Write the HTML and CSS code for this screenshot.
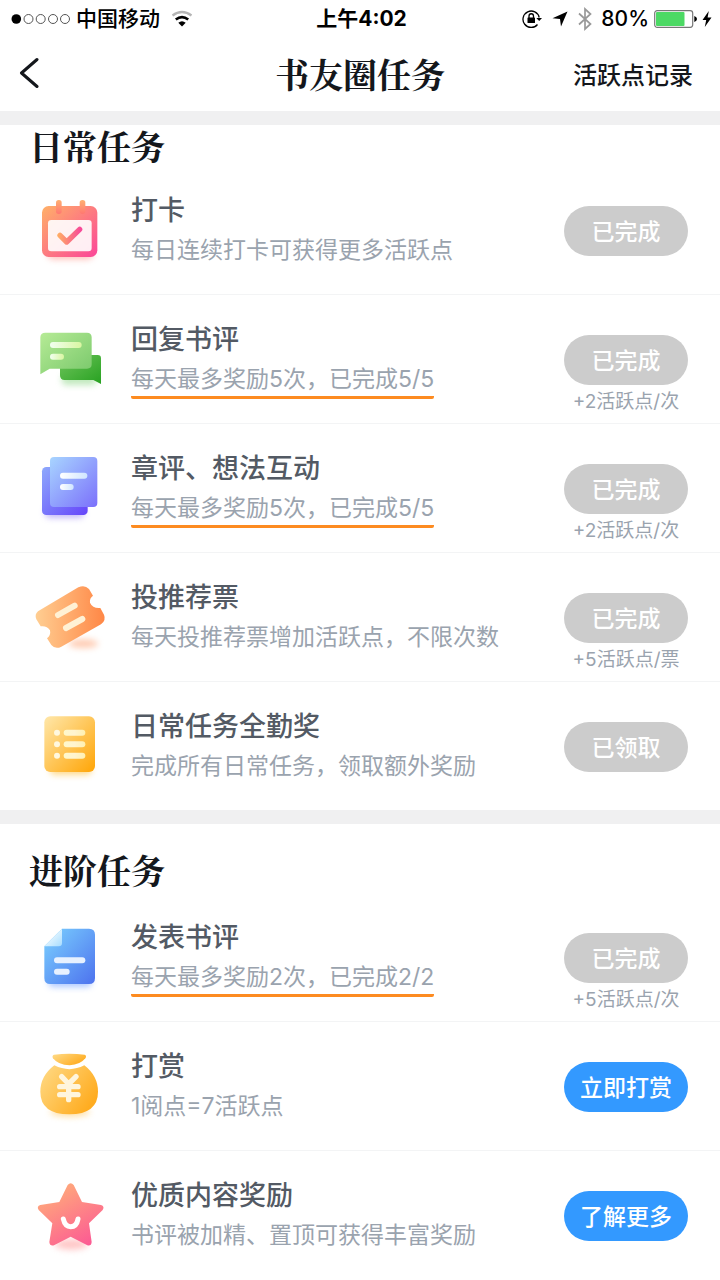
FILE: index.html
```html
<!DOCTYPE html>
<html lang="zh-CN">
<head>
  <meta charset="UTF-8">
  <meta name="viewport" content="width=device-width, initial-scale=1.0">
  <title>书友圈任务</title>
  <link rel="stylesheet" href="styles.css">
</head>
<body>
  <div class="status-bar">
    <div class="status-left">
      <svg class="signal" width="60" height="12" viewBox="0 0 60 12" aria-hidden="true">
        <circle cx="5.300" cy="6" r="4.800" fill="#000"/>
        <g fill="none" stroke="#555" stroke-width="1">
          <circle cx="17.500" cy="6" r="4.500"/>
          <circle cx="29.700" cy="6" r="4.500"/>
          <circle cx="42" cy="6" r="4.500"/>
          <circle cx="54" cy="6" r="4.500"/>
        </g>
      </svg>
      <span>中国移动</span>
      <svg class="wifi" width="22" height="18" viewBox="0 0 22 18" aria-hidden="true">
        <path d="M1.500 5.500 Q11 -1.500 20.500 5.500" fill="none" stroke="#b5b5b5" stroke-width="2.200"/>
        <path d="M4.800 9.600 Q11 4.600 17.200 9.600" fill="none" stroke="#000" stroke-width="2.600"/>
        <path d="M7.300 12.800 Q11 9.800 14.700 12.800 L11 16.500 Z" fill="#000"/>
      </svg>
    </div>
    <div class="status-time">上午4:02</div>
    <div class="status-right">
      <svg width="20" height="20" viewBox="0 0 20 20" aria-hidden="true">
        <path d="M15.500 15.500 A8.200 8.200 0 1 1 17.200 8.500" fill="none" stroke="#000" stroke-width="1.300"/>
        <path d="M14.300 9 H20 L17.200 12 Z" fill="#000"/>
        <rect x="5.500" y="8.500" width="7.500" height="5.500" rx="0.600" fill="#000"/>
        <path d="M7 9 V7 A2.200 2.200 0 0 1 11.500 7 V9" fill="none" stroke="#000" stroke-width="1.300"/>
      </svg>
      <svg class="arrow" width="16" height="16" viewBox="0 0 16 16" aria-hidden="true">
        <path d="M15.500 0.500 L9 15.500 L8 8 L0.500 7.200 Z" fill="#000"/>
      </svg>
      <svg class="bluetooth" width="14" height="24" viewBox="0 0 14 24" aria-hidden="true">
        <path d="M1 6.500 L12.500 17 L7 22 V2 L12.500 7 L1 17.500" fill="none" stroke="#999" stroke-width="1.700"/>
      </svg>
      <span class="percent">80%</span>
      <svg class="battery" width="43" height="18" viewBox="0 0 43 18" aria-hidden="true">
        <rect x="0.700" y="0.700" width="38" height="16.600" rx="2.500" fill="#fff" stroke="#777" stroke-width="1.200"/>
        <rect x="2" y="2" width="28.500" height="14" rx="1" fill="#4cd964"/>
        <path d="M40.300 6 Q43 7 43 9 Q43 11 40.300 12 Z" fill="#000"/>
      </svg>
      <svg class="bolt" width="10" height="18" viewBox="0 0 10 18" aria-hidden="true">
        <path d="M6.800 1 L0.500 10 H4.200 L2.800 17 L9.500 7.500 H5.600 Z" fill="#000"/>
      </svg>
    </div>
  </div>

  <header class="nav-bar">
    <button class="back" type="button" aria-label="返回">
      <svg width="20" height="32" viewBox="0 0 20 32" aria-hidden="true">
        <path d="M18 2.500 L2.500 16 L18 29.500" fill="none" stroke="#14171c" stroke-width="3" stroke-linecap="round" stroke-linejoin="round"/>
      </svg>
    </button>
    <h1>书友圈任务</h1>
    <a class="record-link" href="#">活跃点记录</a>
  </header>

  <main>
    <section class="section">
      <h2>日常任务</h2>
      <ul class="task-list">
        <li class="task">
          <svg class="icon" viewBox="30 -12 240 270" aria-hidden="true">
            <defs>
              <linearGradient id="cal" x1="0" y1="0" x2="1" y2="1"><stop offset="0" stop-color="#ffb168"/><stop offset="1" stop-color="#fb4598"/></linearGradient>
              <linearGradient id="calRing" x1="0" y1="0" x2="0" y2="1"><stop offset="0" stop-color="#ffb071"/><stop offset="1" stop-color="#ff7871"/></linearGradient>
              <linearGradient id="tick" gradientUnits="userSpaceOnUse" x1="115" y1="130" x2="182" y2="130"><stop offset="0" stop-color="#ffac65"/><stop offset="1" stop-color="#f74a98"/></linearGradient>
              <filter id="soft" x="-50%" y="-100%" width="200%" height="300%"><feGaussianBlur stdDeviation="10"/></filter>
            </defs>
            <rect x="82" y="170" width="138" height="38" rx="18" fill="#ffa49b" opacity="0.700" filter="url(#soft)"/>
            <rect x="66" y="48" width="166" height="153" rx="20" fill="url(#cal)"/>
            <rect x="84" y="90" width="131" height="94" rx="10" fill="#fff" opacity="0.900"/>
            <rect x="108" y="30" width="17" height="42" rx="8" fill="url(#calRing)"/>
            <rect x="179" y="30" width="17" height="42" rx="8" fill="url(#calRing)"/>
            <path d="M120 136 L140 156 L179 118" fill="none" stroke="url(#tick)" stroke-width="16" stroke-linecap="round" stroke-linejoin="round"/>
          </svg>
          <div class="task-body">
            <h3>打卡</h3>
            <p class="desc">每日连续打卡可获得更多活跃点</p>
          </div>
          <div class="task-action">
            <button class="btn" type="button" disabled>已完成</button>
          </div>
        </li>
        <li class="task">
          <svg class="icon" viewBox="30 0 240 270" aria-hidden="true">
            <defs>
              <linearGradient id="chat" x1="0" y1="0" x2="1" y2="1"><stop offset="0" stop-color="#b6eb96"/><stop offset="1" stop-color="#79c86b"/></linearGradient>
              <linearGradient id="chatBack" x1="0" y1="0" x2="1" y2="1"><stop offset="0" stop-color="#70c55c"/><stop offset="1" stop-color="#27a121"/></linearGradient>
              <linearGradient id="chatLine"><stop offset="0" stop-color="#f2fff0"/><stop offset="1" stop-color="#d9f6a1"/></linearGradient>
            </defs>
            <rect x="125" y="178" width="105" height="32" rx="14" fill="#a5dfa0" opacity="0.700" filter="url(#soft)"/>
            <path d="M135 120 H233 Q243 120 243 130 V207 L220 195 H134 Q120 195 120 181 V135 Z" fill="url(#chatBack)"/>
            <path d="M76 53 H201 Q215 53 215 67 V148 Q215 161 201 161 H89 L61 178 V67 Q61 53 76 53 Z" fill="url(#chat)"/>
            <rect x="90" y="81" width="95" height="18" rx="9" fill="url(#chatLine)"/>
            <rect x="90" y="116" width="42" height="18" rx="9" fill="url(#chatLine)"/>
          </svg>
          <div class="task-body">
            <h3>回复书评</h3>
            <p class="desc marked">每天最多奖励5次，已完成5/5</p>
          </div>
          <div class="task-action">
            <button class="btn" type="button" disabled>已完成</button>
            <span class="reward">+2活跃点/次</span>
          </div>
        </li>
        <li class="task">
          <svg class="icon" viewBox="30 -3 240 270" aria-hidden="true">
            <defs>
              <linearGradient id="note" x1="0" y1="0" x2="1" y2="1"><stop offset="0" stop-color="#a8d5ff"/><stop offset="1" stop-color="#7b70fb"/></linearGradient>
              <linearGradient id="noteBack" x1="0" y1="0" x2="1" y2="1"><stop offset="0" stop-color="#8ea9fc"/><stop offset="1" stop-color="#6544fa"/></linearGradient>
              <linearGradient id="noteLine"><stop offset="0" stop-color="#fff"/><stop offset="1" stop-color="#d0e5ff"/></linearGradient>
            </defs>
            <rect x="75" y="186" width="118" height="32" rx="14" fill="#a897f5" opacity="0.700" filter="url(#soft)"/>
            <rect x="66" y="66" width="137" height="144" rx="13" fill="url(#noteBack)"/>
            <rect x="90" y="36" width="142" height="150" rx="12" fill="url(#note)"/>
            <rect x="120" y="83" width="82" height="18" rx="9" fill="url(#noteLine)"/>
            <rect x="120" y="117" width="41" height="18" rx="9" fill="url(#noteLine)"/>
          </svg>
          <div class="task-body">
            <h3>章评、想法互动</h3>
            <p class="desc marked">每天最多奖励5次，已完成5/5</p>
          </div>
          <div class="task-action">
            <button class="btn" type="button" disabled>已完成</button>
            <span class="reward">+2活跃点/次</span>
          </div>
        </li>
        <li class="task">
          <svg class="icon" viewBox="30 -6 240 270" aria-hidden="true">
            <defs>
              <linearGradient id="ticket"><stop offset="0" stop-color="#ffce92"/><stop offset="1" stop-color="#ff8746"/></linearGradient>
            </defs>
            <ellipse cx="190" cy="206" rx="44" ry="13" fill="#ff9a68" opacity="0.500" filter="url(#soft)"/>
            <path d="M54 109 L175 37 Q194 28 207 42 L219 62 Q208 70 210 83 Q218 101 241 99 L252 119 Q259 136 243 148 L124 215 Q106 224 94 210 L81 190 Q93 181 90 166 Q80 151 62 154 L49 133 Q43 118 54 109 Z" fill="url(#ticket)"/>
            <path d="M114 120 L164 92 M138 159 L187 132" fill="none" stroke="#fff1d5" stroke-width="18" stroke-linecap="round"/>
          </svg>
          <div class="task-body">
            <h3>投推荐票</h3>
            <p class="desc">每天投推荐票增加活跃点，不限次数</p>
          </div>
          <div class="task-action">
            <button class="btn" type="button" disabled>已完成</button>
            <span class="reward">+5活跃点/票</span>
          </div>
        </li>
        <li class="task">
          <svg class="icon" viewBox="30 6 240 270" aria-hidden="true">
            <defs>
              <linearGradient id="list" x1="0" y1="0" x2="1" y2="1"><stop offset="0" stop-color="#ffe7aa"/><stop offset="1" stop-color="#ffa506"/></linearGradient>
              <linearGradient id="listLine"><stop offset="0" stop-color="#fff8ca"/><stop offset="0.500" stop-color="#fff4d0"/><stop offset="1" stop-color="#fff0b0"/></linearGradient>
            </defs>
            <rect x="90" y="192" width="125" height="32" rx="14" fill="#ffc957" opacity="0.700" filter="url(#soft)"/>
            <rect x="73" y="49" width="152" height="167" rx="18" fill="url(#list)"/>
            <g fill="#fff8df">
              <circle cx="111" cy="98" r="9"/>
              <circle cx="111" cy="133" r="9"/>
              <circle cx="111" cy="167" r="9"/>
            </g>
            <g fill="url(#listLine)">
              <rect x="131" y="89" width="65" height="18" rx="9"/>
              <rect x="131" y="124" width="65" height="18" rx="9"/>
              <rect x="131" y="158" width="65" height="18" rx="9"/>
            </g>
          </svg>
          <div class="task-body">
            <h3>日常任务全勤奖</h3>
            <p class="desc">完成所有日常任务，领取额外奖励</p>
          </div>
          <div class="task-action">
            <button class="btn" type="button" disabled>已领取</button>
          </div>
        </li>
      </ul>
    </section>

    <section class="section section-advanced">
      <h2>进阶任务</h2>
      <ul class="task-list">
        <li class="task">
          <svg class="icon" viewBox="30 -6 240 270" aria-hidden="true">
            <defs>
              <linearGradient id="doc" x1="0" y1="0" x2="1" y2="1"><stop offset="0" stop-color="#7bd2ff"/><stop offset="1" stop-color="#4d72ee"/></linearGradient>
              <linearGradient id="fold" x1="0" y1="0" x2="1" y2="1"><stop offset="0.300" stop-color="#eefaff"/><stop offset="1" stop-color="#a6dcff"/></linearGradient>
            </defs>
            <rect x="85" y="184" width="130" height="32" rx="14" fill="#8db2ff" opacity="0.700" filter="url(#soft)"/>
            <path d="M126 41 H207 Q225 41 225 59 V189 Q225 207 207 207 H91 Q73 207 73 189 V94 Z" fill="url(#doc)"/>
            <path d="M126 41 V84 Q126 94 116 94 H73 Z" fill="url(#fold)"/>
            <rect x="102" y="127" width="94" height="18" rx="9" fill="#e7f1ff"/>
            <rect x="102" y="161" width="47" height="18" rx="9" fill="#e7f1ff"/>
          </svg>
          <div class="task-body">
            <h3>发表书评</h3>
            <p class="desc marked">每天最多奖励2次，已完成2/2</p>
          </div>
          <div class="task-action">
            <button class="btn" type="button" disabled>已完成</button>
            <span class="reward">+5活跃点/次</span>
          </div>
        </li>
        <li class="task">
          <svg class="icon" viewBox="30 6 240 270" aria-hidden="true">
            <defs>
              <linearGradient id="bag" x1="0" y1="0" x2="1" y2="0.600"><stop offset="0" stop-color="#ffdb88"/><stop offset="1" stop-color="#ffac20"/></linearGradient>
            </defs>
            <ellipse cx="150" cy="216" rx="60" ry="14" fill="#ffd27f" opacity="0.700" filter="url(#soft)"/>
            <path d="M102 44 Q148 39 194 44 Q201 47 196 55 Q181 74 149 76 Q114 75 99 55 Q95 47 102 44 Z" fill="url(#bag)"/>
            <path d="M103 76 Q148 99 193 76 Q234 108 234 155 Q234 222 148 223 Q61 222 61 155 Q61 108 103 76 Z" fill="url(#bag)"/>
            <path d="M125 110 L146 132 L168 110 M119 140 H174 M119 164 H174 M146 134 V179" fill="none" stroke="#fff5dc" stroke-width="16" stroke-linecap="round" stroke-linejoin="round"/>
          </svg>
          <div class="task-body">
            <h3>打赏</h3>
            <p class="desc">1阅点=7活跃点</p>
          </div>
          <div class="task-action">
            <button class="btn btn-primary" type="button">立即打赏</button>
          </div>
        </li>
        <li class="task">
          <svg class="icon" viewBox="30 0 240 270" aria-hidden="true">
            <defs>
              <linearGradient id="star" x1="0.200" y1="0" x2="0.800" y2="1"><stop offset="0" stop-color="#ffb079"/><stop offset="1" stop-color="#fc5994"/></linearGradient>
            </defs>
            <ellipse cx="154" cy="220" rx="50" ry="16" fill="#ffa0a0" opacity="0.600" filter="url(#soft)"/>
            <path d="M143 42 Q152 31 161 42 L186 93 L243 102 Q255 106 248 117 L207 157 L215 213 Q214 226 202 223 L152 197 L102 223 Q89 226 88 213 L97 157 L56 117 Q49 106 61 102 L118 93 Z" fill="url(#star)"/>
            <path d="M130 144 Q135 167 152 167 Q170 167 174 144" fill="none" stroke="#fff" stroke-width="15" stroke-linecap="round"/>
          </svg>
          <div class="task-body">
            <h3>优质内容奖励</h3>
            <p class="desc">书评被加精、置顶可获得丰富奖励</p>
          </div>
          <div class="task-action">
            <button class="btn btn-primary" type="button">了解更多</button>
          </div>
        </li>
      </ul>
    </section>
  </main>
</body>
</html>
```
FILE: styles.css
```css
* {
  box-sizing: border-box;
}
body {
  margin: 0;
  font-family: Inter, "Noto Sans CJK SC", sans-serif;
  background-color: #fff;
  color: #14171c;
}
h1, h2, h3, p, ul {
  margin: 0;
  padding: 0;
}
svg {
  display: block;
  flex: none;
}

/* status bar */
.status-bar {
  display: grid;
  grid-template-columns: 1fr auto 1fr;
  align-items: center;
  height: 37px;
  padding: 0 8px 0 11px;
  font-size: 21px;
  font-weight: 500;
  line-height: 37px;
  color: #000;
}
.status-left, .status-right {
  display: flex;
  align-items: center;
}
.signal {
  margin-right: 5px;
}
.wifi {
  margin-left: 11px;
}
.status-time {
  font-weight: 700;
}
.status-right {
  justify-content: flex-end;
}
.arrow {
  margin-left: 10px;
}
.bluetooth {
  margin-left: 10px;
}
.percent {
  margin-left: 9px;
}
.battery {
  margin-left: 5px;
}
.bolt {
  margin-left: 5px;
}

/* title bar */
.nav-bar {
  display: grid;
  grid-template-columns: 1fr auto 1fr;
  align-items: center;
  height: 74px;
  padding: 0 27px 2px;
}
.back {
  justify-self: start;
  margin-left: -8px;
  padding: 0;
  border: none;
  background: none;
  cursor: pointer;
}
h1, h2 {
  font-family: "Noto Serif CJK SC", "Noto Sans CJK SC", serif;
  font-size: 34px;
  font-weight: 700;
  line-height: 41px;
}
.record-link {
  justify-self: end;
  font-size: 24px;
  font-weight: 500;
  color: #14171c;
  text-decoration: none;
}

/* task sections */
.section {
  border-top: 14px solid #f0f0f1;
}
.section h2 {
  padding-left: 29px;
}
.section-advanced h2 {
  padding-top: 25px;
  padding-bottom: 3px;
}
.task-list {
  list-style: none;
}
.task {
  display: flex;
  align-items: flex-start;
  min-height: 129px;
  padding: 0 32px 0 30px;
  border-bottom: 1px solid #f3f4f5;
}
.task:last-child {
  min-height: 128px;
  border-bottom: none;
}
.icon {
  width: 80px;
  height: 90px;
  margin-top: 20px;
}
.task-body {
  flex: 1;
  padding: 22px 0 0 21px;
}
.task-body h3 {
  font-size: 27px;
  font-weight: 500;
  line-height: 46px;
  color: #535a64;
}
.desc {
  width: fit-content;
  font-size: 23px;
  line-height: 33px;
  color: #9aa3ae;
}
.marked {
  border-bottom: 3px solid #fd8b20;
  border-radius: 2px;
}
.task-action {
  display: flex;
  flex-direction: column;
  align-items: center;
  padding-top: 40px;
}
.btn {
  min-width: 124px;
  height: 50px;
  padding: 0 15px 3px;
  border: none;
  border-radius: 25px;
  background-color: #ccc;
  color: #fff;
  font-family: inherit;
  font-size: 23px;
  font-weight: 500;
}
.btn-primary {
  background-color: #3399ff;
  cursor: pointer;
}
.reward {
  margin-top: 5px;
  font-size: 19px;
  line-height: 24px;
  color: #9aa3ae;
}
```
